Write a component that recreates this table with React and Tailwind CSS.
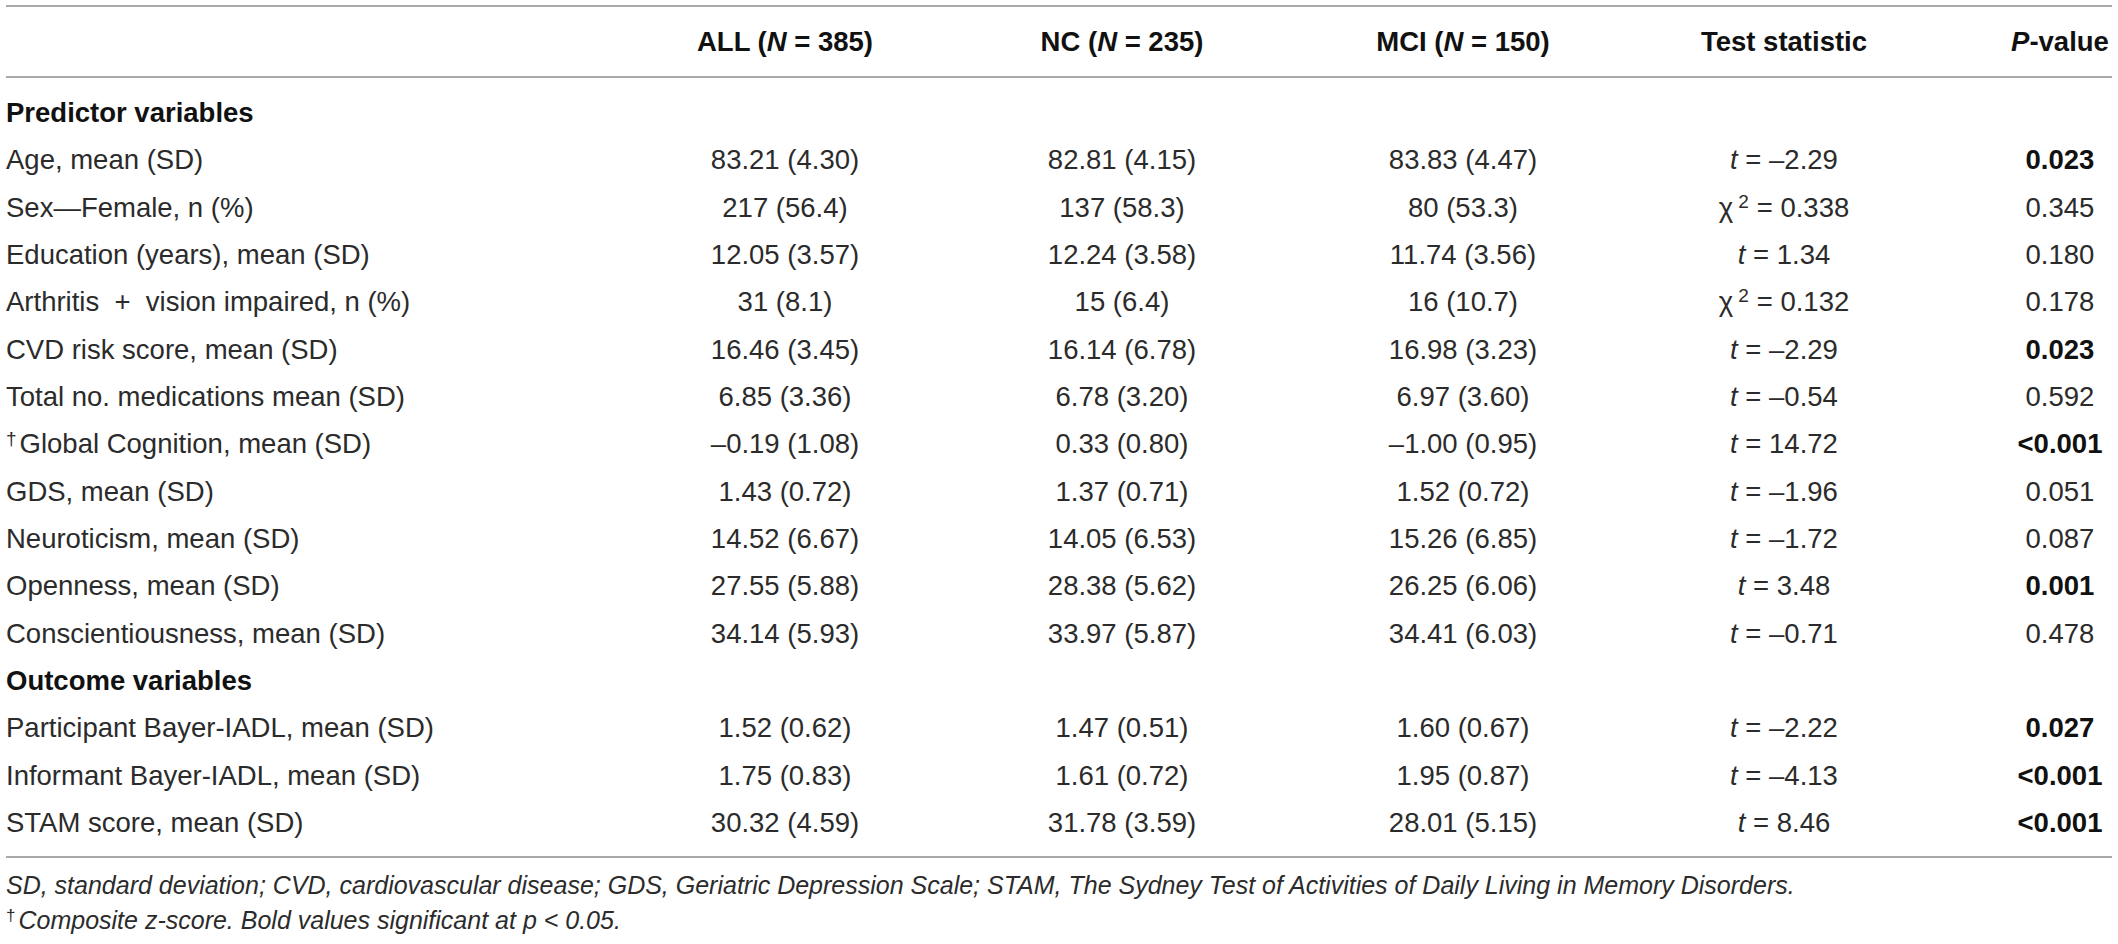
import React from 'react';

const rows = [
  { label: 'Age, mean (SD)', all: '83.21 (4.30)', nc: '82.81 (4.15)', mci: '83.83 (4.47)', stat: ['t', '–2.29'], p: '0.023', bold: true },
  { label: 'Sex—Female, n (%)', all: '217 (56.4)', nc: '137 (58.3)', mci: '80 (53.3)', stat: ['chi', '0.338'], p: '0.345' },
  { label: 'Education (years), mean (SD)', all: '12.05 (3.57)', nc: '12.24 (3.58)', mci: '11.74 (3.56)', stat: ['t', '1.34'], p: '0.180' },
  { label: 'Arthritis  +  vision impaired, n (%)', all: '31 (8.1)', nc: '15 (6.4)', mci: '16 (10.7)', stat: ['chi', '0.132'], p: '0.178' },
  { label: 'CVD risk score, mean (SD)', all: '16.46 (3.45)', nc: '16.14 (6.78)', mci: '16.98 (3.23)', stat: ['t', '–2.29'], p: '0.023', bold: true },
  { label: 'Total no. medications mean (SD)', all: '6.85 (3.36)', nc: '6.78 (3.20)', mci: '6.97 (3.60)', stat: ['t', '–0.54'], p: '0.592' },
  { label: 'Global Cognition, mean (SD)', dagger: true, all: '–0.19 (1.08)', nc: '0.33 (0.80)', mci: '–1.00 (0.95)', stat: ['t', '14.72'], p: '<0.001', bold: true },
  { label: 'GDS, mean (SD)', all: '1.43 (0.72)', nc: '1.37 (0.71)', mci: '1.52 (0.72)', stat: ['t', '–1.96'], p: '0.051' },
  { label: 'Neuroticism, mean (SD)', all: '14.52 (6.67)', nc: '14.05 (6.53)', mci: '15.26 (6.85)', stat: ['t', '–1.72'], p: '0.087' },
  { label: 'Openness, mean (SD)', all: '27.55 (5.88)', nc: '28.38 (5.62)', mci: '26.25 (6.06)', stat: ['t', '3.48'], p: '0.001', bold: true },
  { label: 'Conscientiousness, mean (SD)', all: '34.14 (5.93)', nc: '33.97 (5.87)', mci: '34.41 (6.03)', stat: ['t', '–0.71'], p: '0.478' },
];

const outcomes = [
  { label: 'Participant Bayer-IADL, mean (SD)', all: '1.52 (0.62)', nc: '1.47 (0.51)', mci: '1.60 (0.67)', stat: ['t', '–2.22'], p: '0.027', bold: true },
  { label: 'Informant Bayer-IADL, mean (SD)', all: '1.75 (0.83)', nc: '1.61 (0.72)', mci: '1.95 (0.87)', stat: ['t', '–4.13'], p: '<0.001', bold: true },
  { label: 'STAM score, mean (SD)', all: '30.32 (4.59)', nc: '31.78 (3.59)', mci: '28.01 (5.15)', stat: ['t', '8.46'], p: '<0.001', bold: true },
];

const grid = 'grid grid-cols-[609px_340px_334px_348px_294px_181px] items-center';
const cell = 'flex justify-center whitespace-nowrap';

const Stat = ({ stat }) => {
  const [kind, value] = stat;
  if (kind === 'chi') {
    return (
      <span>
        χ<span className="text-[19px] ml-[5px] mr-[8px] relative -top-[9px]">2</span>= {value}
      </span>
    );
  }
  return (
    <span>
      <i>t</i> = {value}
    </span>
  );
};

const Row = ({ row }) => (
  <div className={`${grid} h-[47.33px]`}>
    <div className="whitespace-pre">
      {row.dagger && <span className="text-[19px] mr-[3px] relative -top-[8px]">†</span>}
      {row.label}
    </div>
    <div className={cell}>{row.all}</div>
    <div className={cell}>{row.nc}</div>
    <div className={cell}>{row.mci}</div>
    <div className={cell}><Stat stat={row.stat} /></div>
    <div className={`${cell} pl-[77px]`}>
      <span className={row.bold ? 'font-bold text-[#111]' : ''}>{row.p}</span>
    </div>
  </div>
);

const SectionHeading = ({ children }) => (
  <div className={`${grid} h-[47.33px]`}>
    <div className="font-bold text-[#111] whitespace-nowrap">{children}</div>
  </div>
);

export default function App() {
  return (
    <div className="bg-white w-[2118px] h-[944px] overflow-hidden text-[#2b2b2b] text-[27.5px] leading-none" style={{ fontFamily: '"Liberation Sans", Arial, sans-serif' }}>
      <div className="ml-[6px] mr-[6px] mt-[5px]">
        <div className="border-t-2 border-b-2 border-[#a9a9a9]">
          <div className={`${grid} h-[69px] font-bold text-[#111]`}>
            <div />
            <div className={cell}><span>ALL (<i>N</i> = 385)</span></div>
            <div className={cell}><span>NC (<i>N</i> = 235)</span></div>
            <div className={cell}><span>MCI (<i>N</i> = 150)</span></div>
            <div className={cell}>Test statistic</div>
            <div className={`${cell} pl-[77px]`}><span><i>P</i>-value</span></div>
          </div>
        </div>
        <div className="pt-[11px] pb-[10px] border-b-2 border-[#a9a9a9]">
          <SectionHeading>Predictor variables</SectionHeading>
          {rows.map((r) => <Row key={r.label} row={r} />)}
          <SectionHeading>Outcome variables</SectionHeading>
          {outcomes.map((r) => <Row key={r.label} row={r} />)}
        </div>
        <div className="pt-[10px] italic text-[25px] leading-[35px]">
          <p>SD, standard deviation; CVD, cardiovascular disease; GDS, Geriatric Depression Scale; STAM, The Sydney Test of Activities of Daily Living in Memory Disorders.</p>
          <p><span className="text-[17px] mr-[3px] not-italic relative -top-[8px]">†</span>Composite z-score. Bold values significant at <i>p</i> &lt; 0.05.</p>
        </div>
      </div>
    </div>
  );
}
